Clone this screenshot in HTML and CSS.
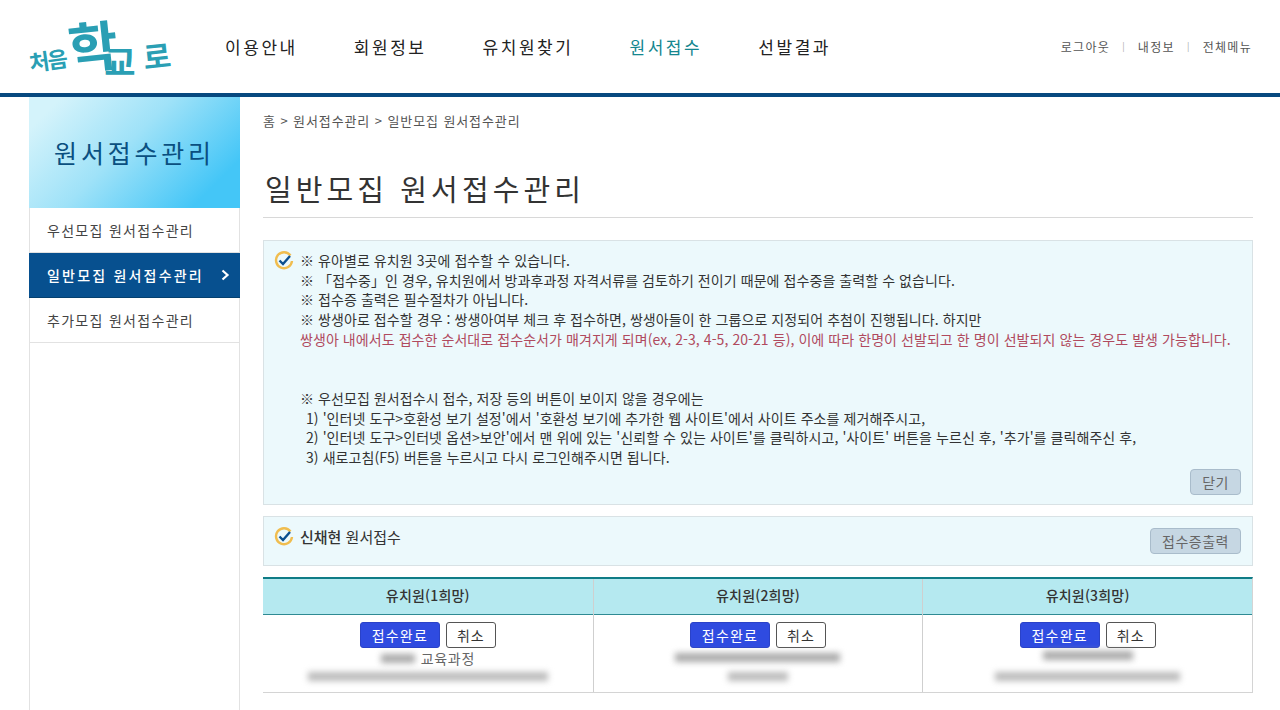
FILE: index.html
```html
<!DOCTYPE html>
<html lang="ko">
<head>
  <meta charset="UTF-8">
  <title>일반모집 원서접수관리 - 처음학교로</title>
  <link rel="stylesheet" href="styles.css">
</head>
<body>
  <header class="header">
    <a href="#" class="logo">
      <span class="logo-small">처음</span><span class="logo-big">학</span><span class="logo-mid">교</span><span class="logo-end">로</span>
    </a>
    <nav class="gnb">
      <a href="#">이용안내</a>
      <a href="#">회원정보</a>
      <a href="#">유치원찾기</a>
      <a href="#" class="on">원서접수</a>
      <a href="#">선발결과</a>
    </nav>
    <div class="util">
      <a href="#">로그아웃</a>
      <i>|</i>
      <a href="#">내정보</a>
      <i>|</i>
      <a href="#">전체메뉴</a>
    </div>
  </header>

  <div class="container">
    <aside class="side">
      <h2 class="side-title">원서접수관리</h2>
      <ul class="side-menu">
        <li><a href="#">우선모집 원서접수관리</a></li>
        <li class="on">
          <a href="#">일반모집 원서접수관리
            <svg class="chevron" width="9" height="12" viewBox="0 0 9 12"><path d="M1.5 1.5 6.5 6l-5 4.500" fill="none" stroke="#fff" stroke-width="2.200"/></svg>
          </a>
        </li>
        <li><a href="#">추가모집 원서접수관리</a></li>
      </ul>
    </aside>

    <main class="content">
      <p class="breadcrumb">홈 &gt; 원서접수관리 &gt; 일반모집 원서접수관리</p>
      <h1 class="page-title">일반모집 원서접수관리</h1>

      <section class="box notice">
        <svg class="check" width="20" height="20" viewBox="0 0 20 20"><path d="M16.500 4.500A8 8 0 1 0 18 10" fill="none" stroke="#f0bd4f" stroke-width="2.400"/><path d="M5.500 9.500 9 13l7-8" fill="none" stroke="#0b4f8f" stroke-width="2.400"/></svg>
        <div class="notice-text">
          <p>※ 유아별로 유치원 3곳에 접수할 수 있습니다.</p>
          <p>※ 「접수중」인 경우, 유치원에서 방과후과정 자격서류를 검토하기 전이기 때문에 접수중을 출력할 수 없습니다.</p>
          <p>※ 접수증 출력은 필수절차가 아닙니다.</p>
          <p>※ 쌍생아로 접수할 경우 : 쌍생아여부 체크 후 접수하면, 쌍생아들이 한 그룹으로 지정되어 추첨이 진행됩니다. 하지만</p>
          <p class="warn">쌍생아 내에서도 접수한 순서대로 접수순서가 매겨지게 되며(ex, 2-3, 4-5, 20-21 등), 이에 따라 한명이 선발되고 한 명이 선발되지 않는 경우도 발생 가능합니다.</p>
          <p class="gap">※ 우선모집 원서접수시 접수, 저장 등의 버튼이 보이지 않을 경우에는</p>
          <p class="indent">1) '인터넷 도구&gt;호환성 보기 설정'에서 '호환성 보기에 추가한 웹 사이트'에서 사이트 주소를 제거해주시고,</p>
          <p class="indent">2) '인터넷 도구&gt;인터넷 옵션&gt;보안'에서 맨 위에 있는 '신뢰할 수 있는 사이트'를 클릭하시고, '사이트' 버튼을 누르신 후, '추가'를 클릭해주신 후,</p>
          <p class="indent">3) 새로고침(F5) 버튼을 누르시고 다시 로그인해주시면 됩니다.</p>
        </div>
        <div class="notice-foot"><button class="btn-gray">닫기</button></div>
      </section>

      <section class="box child">
        <svg class="check" width="20" height="20" viewBox="0 0 20 20"><path d="M16.500 4.500A8 8 0 1 0 18 10" fill="none" stroke="#f0bd4f" stroke-width="2.400"/><path d="M5.500 9.500 9 13l7-8" fill="none" stroke="#0b4f8f" stroke-width="2.400"/></svg>
        <strong class="child-name">신채현 <span>원서접수</span></strong>
        <button class="btn-gray">접수증출력</button>
      </section>

      <div class="apply">
        <div class="apply-col">
          <div class="apply-head">유치원(1희망)</div>
          <div class="apply-body">
            <div class="btn-row"><button class="btn-blue">접수완료</button><button class="btn-white">취소</button></div>
            <div class="blur-name"><span class="blur-part"></span>교육과정</div>
            <div class="blur-line wide"></div>
          </div>
        </div>
        <div class="apply-col">
          <div class="apply-head">유치원(2희망)</div>
          <div class="apply-body">
            <div class="btn-row"><button class="btn-blue">접수완료</button><button class="btn-white">취소</button></div>
            <div class="blur-line first"></div>
            <div class="blur-line short"></div>
          </div>
        </div>
        <div class="apply-col">
          <div class="apply-head">유치원(3희망)</div>
          <div class="apply-body">
            <div class="btn-row"><button class="btn-blue">접수완료</button><button class="btn-white">취소</button></div>
            <div class="blur-line mid"></div>
            <div class="blur-line long"></div>
          </div>
        </div>
      </div>
    </main>
  </div>
</body>
</html>
```
FILE: styles.css
```css
* {
  box-sizing: border-box;
}
html, body {
  height: 710px;
  overflow: hidden;
}
body {
  margin: 0;
  background-color: #fff;
  color: #333;
  font-family: "Noto Sans CJK KR", "Noto Sans", sans-serif;
  font-size: 13px;
}
a {
  color: inherit;
  text-decoration: none;
}
p, h1, h2, ul {
  margin: 0;
  padding: 0;
}
ul {
  list-style: none;
}
button {
  font-family: inherit;
  cursor: pointer;
}

/* header */
.header {
  display: flex;
  align-items: center;
  height: 97px;
  padding: 0 28px 0 29px;
  border-bottom: 4px solid #07497f;
}
.logo {
  display: flex;
  align-items: flex-end;
  flex: 0 0 196px;
  height: 62px;
  color: #2a9fb4;
  font-weight: 700;
  line-height: 1;
}
.logo-small {
  font-size: 22px;
  letter-spacing: -2px;
  margin-bottom: 8px;
  transform: rotate(-8deg);
}
.logo-big {
  font-size: 54px;
  margin: 0 -14px 7px 3px;
  transform: rotate(-6deg);
}
.logo-mid {
  font-size: 34px;
}
.logo-end {
  font-size: 30px;
  margin-left: 8px;
  margin-bottom: 8px;
  transform: rotate(-6deg);
}
.gnb {
  display: flex;
  gap: 56px;
  font-size: 17px;
  letter-spacing: 2.550px;
  color: #222;
}
.gnb .on {
  color: #14868f;
}
.util {
  display: flex;
  align-items: center;
  gap: 12px;
  margin-left: auto;
  font-size: 12px;
  letter-spacing: 1.300px;
  color: #555;
}
.util i {
  font-style: normal;
  font-size: 9px;
  color: #aaa;
}

/* layout */
.container {
  display: flex;
  align-items: stretch;
  height: 613px;
  padding-left: 29px;
}
.side {
  flex: 0 0 211px;
  border-left: 1px solid #e2e2e2;
  border-right: 1px solid #e2e2e2;
}
.side-title {
  height: 111px;
  margin: 0 -1px;
  padding-top: 34px;
  text-align: center;
  font-size: 25px;
  font-weight: 400;
  line-height: 42px;
  letter-spacing: 3.800px;
  color: #0a4f80;
  background: linear-gradient(135deg, #d4f3fb 10%, #9fe2f8 45%, #44c6f7 85%);
}
.side-menu li {
  height: 45px;
  border-bottom: 1px solid #e2e2e2;
}
.side-menu a {
  display: flex;
  align-items: center;
  justify-content: space-between;
  height: 44px;
  padding: 0 10px 0 17px;
  font-size: 14px;
  letter-spacing: 1.300px;
  color: #444;
}
.side-menu .on {
  margin: 0 -1px;
  background-color: #07508f;
  border-bottom: 1px solid #04406f;
}
.side-menu .on a {
  padding-left: 18px;
  font-weight: 500;
  letter-spacing: 2.200px;
  color: #fff;
}
.content {
  width: 990px;
  margin-left: 23px;
}
.breadcrumb {
  padding-top: 14px;
  font-size: 13px;
  line-height: 20px;
  letter-spacing: 0.900px;
  color: #555;
}
.page-title {
  height: 87px;
  margin-bottom: 22px;
  padding: 35px 0 0 2px;
  border-bottom: 1px solid #d8d8d8;
  font-size: 29px;
  font-weight: 400;
  line-height: 44px;
  letter-spacing: 4.100px;
  color: #333;
}

/* box */
.box {
  position: relative;
  background-color: #ecf9fc;
  border: 1px solid #d9e2e5;
}
.check {
  position: absolute;
  left: 10px;
  top: 10px;
}
.notice {
  height: 265px;
  margin-bottom: 11px;
  padding: 10px 11px 0 36px;
}
.notice-text {
  height: 218px;
  font-size: 14px;
  line-height: 19.700px;
  letter-spacing: 0.070px;
  color: #333;
  white-space: nowrap;
}
.notice-text .warn {
  color: #b04a5e;
}
.notice-text .gap {
  margin-top: 39.400px;
}
.notice-text .indent {
  padding-left: 6px;
}
.notice-foot {
  display: flex;
  justify-content: flex-end;
}
.btn-gray {
  height: 26px;
  padding: 0 11px;
  background-color: #c6d7e3;
  border: 1px solid #a9bccb;
  border-radius: 4px;
  font-size: 14px;
  letter-spacing: 0.500px;
  color: #666;
}
.child {
  display: flex;
  align-items: center;
  justify-content: space-between;
  height: 50px;
  margin-bottom: 11px;
  padding: 0 11px 0 36px;
}
.child-name {
  font-weight: 500;
  font-size: 15px;
  color: #333;
  margin-top: -10px;
}
.child-name span {
  font-weight: 400;
}

/* apply table */
.apply {
  display: grid;
  grid-template-columns: repeat(3, 1fr);
  height: 116px;
  border-top: 2px solid #0f7c86;
  border-bottom: 1px solid #d4d4d4;
  border-right: 1px solid #d4d4d4;
}
.apply-col {
  border-left: 1px solid #cfcfcf;
}
.apply-col:first-child {
  border-left: 0;
}
.apply-head {
  height: 36px;
  line-height: 32px;
  text-align: center;
  font-size: 14px;
  font-weight: 500;
  letter-spacing: 0.200px;
  color: #333;
  background-color: #b5e9f0;
  border-bottom: 1px solid #2f8a93;
}
.apply-body {
  display: flex;
  flex-direction: column;
  align-items: center;
  padding-top: 7px;
}
.btn-row {
  display: flex;
  gap: 6px;
  margin-bottom: 1px;
}
.btn-blue {
  width: 80px;
  height: 26px;
  padding: 0;
  background-color: #2f4be0;
  border: 1px solid #2a42c8;
  border-radius: 3px;
  font-size: 14px;
  letter-spacing: 1.200px;
  color: #fff;
}
.btn-white {
  width: 50px;
  height: 26px;
  padding: 0;
  background-color: #fff;
  border: 1px solid #555;
  border-radius: 3px;
  font-size: 14px;
  letter-spacing: 1px;
  color: #333;
}
.blur-name {
  display: flex;
  align-items: center;
  gap: 6px;
  height: 18px;
  font-size: 14px;
  line-height: 18px;
  letter-spacing: 0.700px;
  color: #666;
}
.blur-part {
  width: 34px;
  height: 9px;
  background-color: #aaa;
  filter: blur(3px);
}
.blur-line {
  height: 9px;
  background-color: #bbb;
  filter: blur(3px);
}
.blur-line.first {
  width: 165px;
  margin: 4px 0 10px;
  background-color: #aaa;
}
.blur-line.short {
  width: 60px;
}
.blur-line.mid {
  width: 90px;
  margin: 2px 0 12px;
  background-color: #aaa;
}
.blur-line.long {
  width: 185px;
}
.blur-line.wide {
  width: 240px;
  margin-top: 5px;
}
```
